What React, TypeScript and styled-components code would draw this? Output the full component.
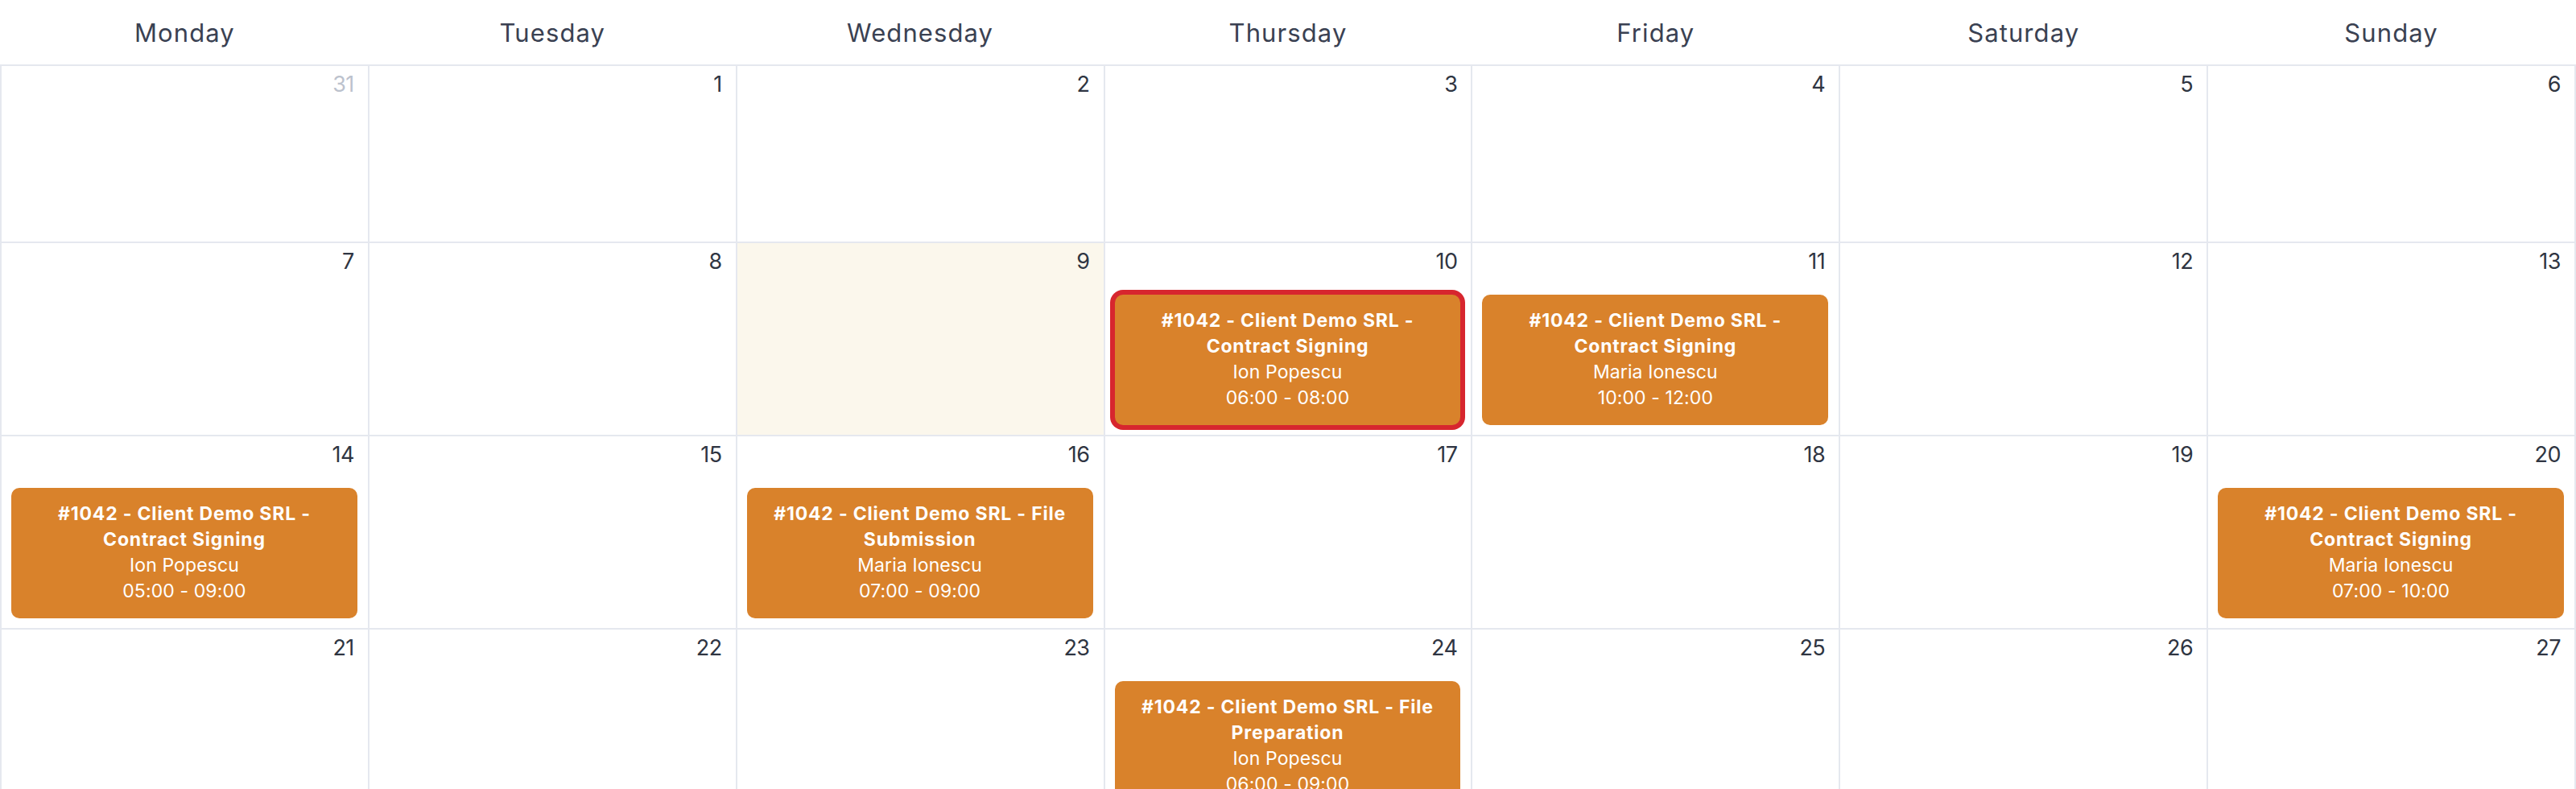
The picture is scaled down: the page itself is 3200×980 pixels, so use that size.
import React from "react";
import styled, { createGlobalStyle } from "styled-components";

const GlobalStyle = createGlobalStyle`
  html, body {
    margin: 0;
    padding: 0;
    background: #ffffff;
    font-family: "Inter", "Noto Sans", sans-serif;
  }
`;

type CalEvent = {
  title: string;
  person: string;
  time: string;
  selected?: boolean;
};

type Day = {
  num: number;
  outside?: boolean;
  today?: boolean;
  events?: CalEvent[];
};

const DAYS = ["Monday", "Tuesday", "Wednesday", "Thursday", "Friday", "Saturday", "Sunday"];

const signing = "#1042 - Client Demo SRL - Contract Signing";

const WEEKS: Day[][] = [
  [
    { num: 31, outside: true },
    { num: 1 },
    { num: 2 },
    { num: 3 },
    { num: 4 },
    { num: 5 },
    { num: 6 },
  ],
  [
    { num: 7 },
    { num: 8 },
    { num: 9, today: true },
    {
      num: 10,
      events: [{ title: signing, person: "Ion Popescu", time: "06:00 - 08:00", selected: true }],
    },
    {
      num: 11,
      events: [{ title: signing, person: "Maria Ionescu", time: "10:00 - 12:00" }],
    },
    { num: 12 },
    { num: 13 },
  ],
  [
    {
      num: 14,
      events: [{ title: signing, person: "Ion Popescu", time: "05:00 - 09:00" }],
    },
    { num: 15 },
    {
      num: 16,
      events: [
        {
          title: "#1042 - Client Demo SRL - File Submission",
          person: "Maria Ionescu",
          time: "07:00 - 09:00",
        },
      ],
    },
    { num: 17 },
    { num: 18 },
    { num: 19 },
    {
      num: 20,
      events: [{ title: signing, person: "Maria Ionescu", time: "07:00 - 10:00" }],
    },
  ],
  [
    { num: 21 },
    { num: 22 },
    { num: 23 },
    {
      num: 24,
      events: [
        {
          title: "#1042 - Client Demo SRL - File Preparation",
          person: "Ion Popescu",
          time: "06:00 - 09:00",
        },
      ],
    },
    { num: 25 },
    { num: 26 },
    { num: 27 },
  ],
];

const Page = styled.div`
  width: 3200px;
`;

const HeaderRow = styled.div`
  display: grid;
  grid-template-columns: repeat(7, 1fr);
  column-gap: 2px;
  padding: 0 2px;
  height: 80px;
`;

const HeaderCell = styled.div`
  display: flex;
  align-items: center;
  justify-content: center;
  font-size: 31px;
  font-weight: 400;
  letter-spacing: 1.1px;
  color: #3a4152;
`;

const MonthGrid = styled.div`
  display: grid;
  grid-template-columns: repeat(7, 1fr);
  gap: 2px;
  padding: 2px;
  background: #e5e8ef;
`;

const Cell = styled.div<{ $today?: boolean }>`
  display: flex;
  flex-direction: column;
  min-height: 218px;
  box-sizing: border-box;
  padding: 9px 0 12px;
  background: ${(p) => (p.$today ? "#fbf7ec" : "#ffffff")};
  min-width: 0;
`;

const DateNum = styled.div<{ $outside?: boolean }>`
  align-self: flex-end;
  padding-right: 17px;
  font-size: 27px;
  line-height: 28px;
  height: 28px;
  letter-spacing: -0.5px;
  color: ${(p) => (p.$outside ? "#bcc2cd" : "#2f3542")};
`;

const EventList = styled.div`
  display: flex;
  flex-direction: column;
  gap: 8px;
  margin-top: 27px;
  padding: 0 13px 0 12px;
`;

const EventCard = styled.div<{ $selected?: boolean }>`
  box-sizing: border-box;
  background: #d9822b;
  color: #ffffff;
  border-radius: 10px;
  padding: 16px 14px 18px;
  text-align: center;
  font-size: 23px;
  line-height: 32px;
  letter-spacing: 0.1px;
  box-shadow: ${(p) => (p.$selected ? "0 0 0 6px #d7262e" : "none")};
`;

const EventTitle = styled.div`
  font-weight: 700;
  letter-spacing: 0.8px;
`;

const EventLine = styled.div`
  font-weight: 400;
`;

export default function App() {
  return (
    <Page>
      <GlobalStyle />
      <HeaderRow>
        {DAYS.map((d) => (
          <HeaderCell key={d}>{d}</HeaderCell>
        ))}
      </HeaderRow>
      <MonthGrid>
        {WEEKS.flat().map((day, i) => (
          <Cell key={i} $today={day.today}>
            <DateNum $outside={day.outside}>{day.num}</DateNum>
            {day.events && (
              <EventList>
                {day.events.map((ev, j) => (
                  <EventCard key={j} $selected={ev.selected}>
                    <EventTitle>{ev.title}</EventTitle>
                    <EventLine>{ev.person}</EventLine>
                    <EventLine>{ev.time}</EventLine>
                  </EventCard>
                ))}
              </EventList>
            )}
          </Cell>
        ))}
      </MonthGrid>
    </Page>
  );
}
